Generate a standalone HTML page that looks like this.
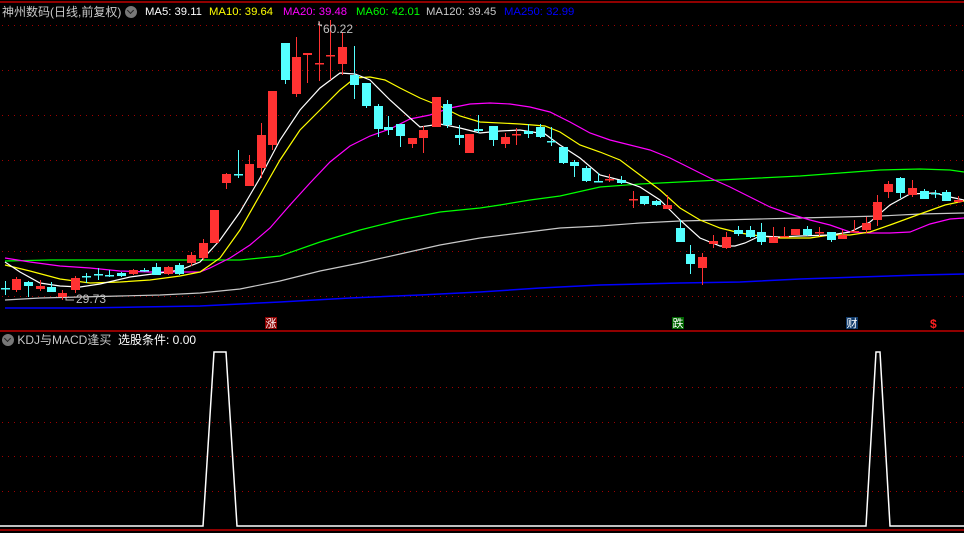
<!DOCTYPE html>
<html><head><meta charset="utf-8">
<style>
html,body{margin:0;padding:0;background:#000;width:964px;height:533px;overflow:hidden}
.t{position:absolute;font-family:"Liberation Sans","Noto Sans CJK SC",sans-serif;font-size:12px;white-space:nowrap;line-height:14px}
.m{font-size:11.3px}
.ic{display:inline-block;width:12px;height:12px;border-radius:50%;background:#777;vertical-align:-2px;position:relative}
.ic:after{content:"";position:absolute;left:3px;top:2px;width:4px;height:4px;border-right:1.5px solid #222;border-bottom:1.5px solid #222;transform:rotate(45deg)}
.lb{position:absolute;width:12px;height:12px;font-size:11px;line-height:12px;text-align:center;color:#fff;font-family:"Noto Sans CJK SC",sans-serif}
</style></head><body>
<svg id="s" width="964" height="533" style="position:absolute;left:0;top:0">
<line x1="0" y1="2" x2="964" y2="2" stroke="#c00000" stroke-width="1.5"/>
<line x1="0" y1="331" x2="964" y2="331" stroke="#c00000" stroke-width="1.5"/>
<line x1="0" y1="530" x2="964" y2="530" stroke="#c00000" stroke-width="1.5"/>
<g stroke="#a00000" stroke-width="1" stroke-dasharray="1,5">
<line x1="2" y1="25.5" x2="964" y2="25.5"/><line x1="2" y1="70.5" x2="964" y2="70.5"/>
<line x1="2" y1="115.5" x2="964" y2="115.5"/><line x1="2" y1="160.5" x2="964" y2="160.5"/>
<line x1="2" y1="205.5" x2="964" y2="205.5"/><line x1="2" y1="251.5" x2="964" y2="251.5"/>
<line x1="2" y1="296.5" x2="964" y2="296.5"/>
<line x1="2" y1="387.5" x2="964" y2="387.5"/><line x1="2" y1="422.5" x2="964" y2="422.5"/>
<line x1="2" y1="456.5" x2="964" y2="456.5"/><line x1="2" y1="491.5" x2="964" y2="491.5"/>
</g>
<g fill="none" stroke-width="1.2">
<polyline stroke="#0000ff" stroke-width="1.5" points="5,308 80,308 140,307 200,306 280,302 350,298 420,295 480,292 540,288 600,285 680,283 740,282 800,279 860,277 920,275 964,274"/>
<polyline stroke="#c8c8c8" points="5,300 40,298 80,297 120,296 160,295 200,293 240,289 280,281 320,271 360,263 400,254 440,245 480,238 520,233 560,228 600,226 640,223 680,221 720,220 760,219 800,218 840,217 880,216 920,214 964,213"/>
<polyline stroke="#00ff00" points="5,261 50,260 100,260 150,260 200,260 240,260 280,256 320,242 360,230 400,220 440,212 480,208 500,205 530,200 560,196 600,187 640,184 680,182 720,180 760,178 800,176 840,173 880,170 920,169 950,170 964,172"/>
<polyline stroke="#ff00ff" points="5,258 30,262 60,266 90,268 120,271 150,272 180,272 200,272 210,268 230,258 250,245 270,228 290,205 310,183 330,162 350,146 370,136 390,129 410,119 430,115 450,108 470,104 490,103 510,104 530,107 550,112 570,122 590,133 610,140 630,145 650,150 670,158 690,168 710,178 730,187 750,197 770,207 790,214 810,220 830,225 850,232 870,233 890,233 910,232 930,224 950,219 964,218"/>
<polyline stroke="#ffff00" points="5,265 30,271 60,279 90,283 120,282 150,280 180,276 200,272 220,258 240,230 260,195 280,160 300,130 320,110 340,90 355,78 370,77 385,80 400,88 420,98 440,106 460,116 480,122 520,124 545,126 560,132 580,145 600,152 620,160 640,175 660,190 680,208 700,220 720,228 740,233 760,236 780,238 810,238 830,235 850,235 870,232 890,225 920,214 945,205 964,201"/>
<polyline stroke="#ffffff" points="5,262 20,272 40,283 60,286 80,287 100,284 130,277 160,273 180,270 200,262 220,240 240,212 260,178 280,140 300,110 320,88 340,73 355,74 370,80 390,100 410,118 420,127 440,124 460,128 480,133 500,131 520,130 545,134 560,145 580,158 600,175 620,180 640,187 660,200 680,220 700,238 720,246 735,246 745,243 760,236 780,237 800,236 830,235 850,232 870,222 890,205 910,194 935,193 950,197 964,200"/>
<polyline stroke="#ffffff" stroke-width="1.5" points="0,526 203,526 214,352 226,352 237,526 866,526 876,352 880,352 890,526 964,526"/>
</g>
<g id="c"></g>
<text x="323" y="33" fill="#c0c0c0" font-family="Liberation Sans" font-size="12">60.22</text>
<text x="76" y="303" fill="#c0c0c0" font-family="Liberation Sans" font-size="12">29.73</text>
<path d="M319,21 v4 h3 M318,24 l4,2" stroke="#c0c0c0" fill="none"/>
<path d="M66,297 v3 h8" stroke="#c0c0c0" fill="none"/>
</svg>
<div class="t" style="left:2px;top:5px;color:#c8c8c8">神州数码(日线,前复权) <span class="ic"></span></div>
<div class="t m" style="left:145px;top:5px;color:#fff">MA5: 39.11</div>
<div class="t m" style="left:209px;top:5px;color:#ffff00">MA10: 39.64</div>
<div class="t m" style="left:283px;top:5px;color:#ff00ff">MA20: 39.48</div>
<div class="t m" style="left:356px;top:5px;color:#00ff00">MA60: 42.01</div>
<div class="t m" style="left:426px;top:5px;color:#c8c8c8">MA120: 39.45</div>
<div class="t m" style="left:504px;top:5px;color:#0000ff">MA250: 32.99</div>
<div class="t" style="left:2px;top:333px;color:#c8c8c8"><span class="ic"></span> KDJ与MACD逢买 &nbsp;<span style="color:#fff">选股条件: 0.00</span></div>
<div class="lb" style="left:265px;top:317px;background:#8b0000">涨</div>
<div class="lb" style="left:672px;top:317px;background:#006400">跌</div>
<div class="lb" style="left:846px;top:317px;background:#103a6a">财</div>
<div class="t" style="left:930px;top:317px;color:#ff2020;font-weight:bold">$</div>
<script>
var d=[[5,'c',288,289,281,295],[16,'r',279,290,277,292],[28,'c',282,286,281,297],[40,'r',286,289,280,291],[51,'c',287,292,282,292],[62,'r',293,297,290,300],[75,'r',278,290,276,293],[86,'c',276,277,273,283],[98,'c',274,275,268,280],[109,'c',275,276,270,277],[121,'c',273,276,272,277],[133,'r',270,274,269,275],[144,'c',270,271,268,272],[156,'c',267,275,263,275],[168,'r',267,274,266,275],[179,'c',265,274,263,275],[191,'r',255,263,252,266],[203,'r',243,258,239,260],[214,'r',210,243,210,243],[226,'r',174,183,173,189],[238,'c',174,175,150,178],[249,'r',164,186,155,186],[261,'r',135,168,123,178],[272,'r',91,145,91,150],[285,'c',43,80,43,84],[296,'r',57,94,37,97],[307,'r',53,55,53,83],[319,'r',63,64,22,81],[330,'r',55,56,20,80],[342,'r',47,64,32,75],[354,'c',75,85,46,99],[366,'c',83,106,83,108],[378,'c',106,129,104,137],[388,'c',127,130,116,135],[400,'c',124,136,124,147],[412,'r',138,144,138,148],[423,'r',130,138,126,153],[436,'r',97,127,97,127],[447,'c',104,125,100,128],[459,'c',135,138,125,145],[469,'r',134,153,134,153],[478,'c',129,131,115,133],[493,'c',126,140,126,146],[505,'r',137,144,133,148],[516,'r',134,135,128,145],[528,'c',131,134,124,138],[540,'c',127,137,124,138],[551,'c',141,142,127,146],[563,'c',147,163,147,164],[574,'c',162,166,160,177],[586,'c',168,181,166,182],[598,'c',181,182,173,182],[609,'r',179,180,174,182],[621,'c',180,183,176,184],[633,'r',199,200,191,208],[644,'c',196,204,196,205],[656,'c',201,205,200,206],[667,'r',205,209,195,209],[680,'c',228,242,220,242],[690,'c',254,264,245,274],[702,'r',257,268,253,285],[713,'r',241,244,235,248],[726,'r',237,248,232,249],[738,'c',230,234,226,236],[750,'c',230,237,226,238],[761,'c',232,242,223,245],[773,'r',237,243,227,243],[784,'r',236,237,227,237],[795,'r',229,235,229,235],[807,'c',229,235,226,236],[819,'r',232,233,227,236],[831,'c',232,240,232,242],[842,'r',235,239,230,239],[854,'r',231,232,220,232],[866,'r',223,230,217,233],[877,'r',202,220,195,226],[888,'r',184,192,181,198],[900,'c',178,193,177,198],[912,'r',188,195,180,197],[924,'c',191,199,189,199],[935,'c',193,194,190,198],[946,'c',192,201,190,201],[958,'r',200,202,196,203]];
var g=document.getElementById('c'),h='';
d.forEach(function(a){var col=a[1]=='r'?'#ff3232':'#54ffff';var x=a[0];
h+='<line x1="'+(x+.5)+'" y1="'+a[4]+'" x2="'+(x+.5)+'" y2="'+a[5]+'" stroke="'+col+'"/>';
var bh=a[3]-a[2];if(bh<2){h+='<rect x="'+(x-4)+'" y="'+a[2]+'" width="9" height="1.5" fill="'+col+'"/>';}
else h+='<rect x="'+(x-4)+'" y="'+a[2]+'" width="9" height="'+bh+'" fill="'+col+'"/>';});
g.innerHTML=h;
</script>
</body></html>
